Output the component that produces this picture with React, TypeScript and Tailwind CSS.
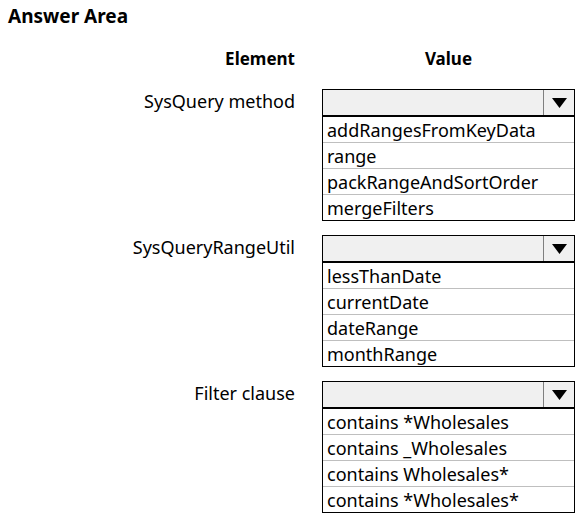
const sections = [
  {
    label: 'SysQuery method',
    options: ['addRangesFromKeyData', 'range', 'packRangeAndSortOrder', 'mergeFilters'],
  },
  {
    label: 'SysQueryRangeUtil',
    options: ['lessThanDate', 'currentDate', 'dateRange', 'monthRange'],
  },
  {
    label: 'Filter clause',
    options: ['contains *Wholesales', 'contains _Wholesales', 'contains Wholesales*', 'contains *Wholesales*'],
  },
]

function Dropdown({ options }: { options: string[] }) {
  return (
    <div className="border border-black bg-white">
      {/* closed select header */}
      <div className="flex h-[27px] bg-[#f0f0f0] border-b-2 border-black">
        <div className="flex-1" />
        <div className="w-[31px] border-l border-[#7f7f7f] flex items-center justify-center">
          <svg width="15" height="10" viewBox="0 0 15 10" className="mt-[1px]">
            <polygon points="0,0 15,0 7.5,10" fill="#000" />
          </svg>
        </div>
      </div>
      {/* option list */}
      {options.map((opt, i) => (
        <div
          key={opt}
          className={
            'px-[4px] flex items-center text-[18px] leading-none ' +
            (i < options.length - 1 ? 'h-[26px] border-b border-[#bfbfbf]' : 'h-[25px]')
          }
        >
          {opt}
        </div>
      ))}
    </div>
  )
}

export default function App() {
  return (
    <div className="w-[587px] h-[519px] bg-white text-black pl-2 pt-[5px] font-['Noto_Sans',sans-serif]">
      <h1 className="text-[19px] font-bold leading-[22px]">Answer Area</h1>

      <div className="mt-[20px] grid grid-cols-[287px_253px] gap-x-[27px]">
        <div className="text-right font-bold text-[17px] leading-[24px]">Element</div>
        <div className="text-center font-bold text-[17px] leading-[24px]">Value</div>
      </div>

      <div className="mt-[18px] flex flex-col gap-[14px]">
        {sections.map(s => (
          <div key={s.label} className="grid grid-cols-[287px_253px] gap-x-[27px]">
            <div className="text-right text-[18px] leading-[24px]">{s.label}</div>
            <Dropdown options={s.options} />
          </div>
        ))}
      </div>
    </div>
  )
}
